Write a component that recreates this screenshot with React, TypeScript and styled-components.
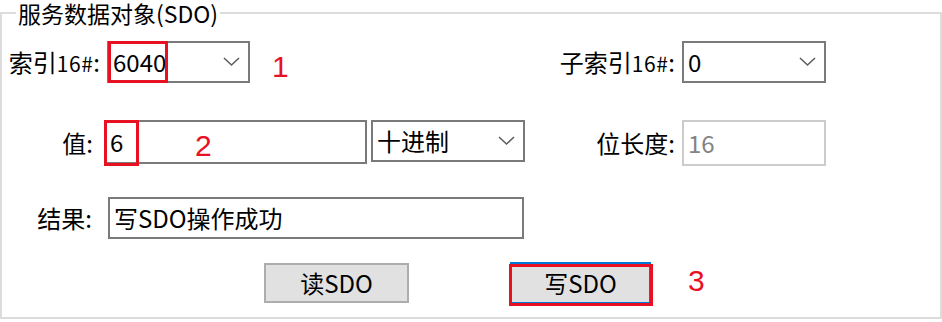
import { FC } from 'react'
import styled, { createGlobalStyle } from 'styled-components'

const red = '#e81123'

const GlobalStyle = createGlobalStyle`
  * {
    box-sizing: border-box;
  }
  html,
  body {
    margin: 0;
    padding: 0;
    background: #fff;
  }
  body {
    width: 942px;
    height: 322px;
    overflow: hidden;
    font-family: 'Noto Sans CJK SC', 'Microsoft YaHei', sans-serif;
    font-size: 24px;
    color: #000;
  }
`

const Group = styled.fieldset`
  margin: 0;
  width: 942px;
  height: 319px;
  border: 2px solid #dcdcdc;
  padding: 15px 114px 0 0;
  min-inline-size: 0;
`

const Caption = styled.legend`
  margin-left: 14px;
  padding: 0 2px;
  font-size: 23px;
  line-height: 26px;
  white-space: nowrap;
`

const Row = styled.div<{ $h: number; $top?: number }>`
  display: flex;
  align-items: center;
  height: ${(p) => p.$h}px;
  margin-top: ${(p) => p.$top ?? 0}px;
`

const Label = styled.span<{ $w?: number; $gap: number }>`
  flex: none;
  width: ${(p) => (p.$w ? `${p.$w}px` : 'auto')};
  margin-right: ${(p) => p.$gap}px;
  text-align: right;
  white-space: nowrap;
  line-height: 1;
`

const Small = styled.span`
  font-size: 21px;
  letter-spacing: 0.5px;
`

const RightField = styled.div`
  display: flex;
  align-items: center;
  align-self: stretch;
  margin-left: auto;
`

const Box = styled.div<{ $w: number; $h: number; $left?: number; $disabled?: boolean }>`
  position: relative;
  flex: none;
  align-self: flex-start;
  display: flex;
  align-items: center;
  width: ${(p) => p.$w}px;
  height: ${(p) => p.$h}px;
  margin-left: ${(p) => p.$left ?? 0}px;
  padding: 0 8px 0 4px;
  border: 2px solid ${(p) => (p.$disabled ? '#cccccc' : '#7a7a7a')};
  background: #fff;
  color: ${(p) => (p.$disabled ? '#838383' : '#000')};
  line-height: 1;
  white-space: nowrap;
`

const Chevron = styled.svg`
  flex: none;
  margin-left: auto;
  width: 17px;
  height: 10px;
`

const Mark = styled.span<{ $l: number; $t: number; $w: number; $h: number }>`
  position: absolute;
  left: ${(p) => p.$l}px;
  top: ${(p) => p.$t}px;
  width: ${(p) => p.$w}px;
  height: ${(p) => p.$h}px;
  border: 3px solid ${red};
  pointer-events: none;
`

const Note = styled.span<{ $left?: number; $shift?: number }>`
  flex: none;
  margin-left: ${(p) => p.$left ?? 0}px;
  margin-top: ${(p) => p.$shift ?? 0}px;
  font-family: 'Liberation Sans', Arial, sans-serif;
  font-size: 30px;
  line-height: 30px;
  color: ${red};
`

const FloatNote = styled(Note)`
  position: absolute;
  left: 89px;
  top: 9px;
  margin: 0;
`

const ButtonWrap = styled.div<{ $left: number }>`
  position: relative;
  flex: none;
  align-self: flex-start;
  margin-left: ${(p) => p.$left}px;
`

const Button = styled.button<{ $w: number; $h: number; $focused?: boolean; $top?: number }>`
  display: block;
  width: ${(p) => p.$w}px;
  height: ${(p) => p.$h}px;
  margin-top: ${(p) => p.$top ?? 0}px;
  padding: 0;
  border: 2px solid ${(p) => (p.$focused ? '#0078d7' : '#adadad')};
  background: #e1e1e1;
  font-family: inherit;
  font-size: 24px;
  line-height: 1;
  color: #000;
`

const Combo: FC<{ value: string; w: number; h: number; left?: number; mark?: boolean }> = ({
  value,
  w,
  h,
  left,
  mark,
}) => (
  <Box $w={w} $h={h} $left={left}>
    {value}
    <Chevron viewBox="0 0 17 10">
      <polyline points="1,1 8.5,8 16,1" fill="none" stroke="#5f5f5f" strokeWidth="1.6" />
    </Chevron>
    {mark && <Mark $l={-1} $t={-2} $w={60} $h={42} />}
  </Box>
)

export default function App() {
  return (
    <>
      <GlobalStyle />
      <Group>
        <Caption>服务数据对象(SDO)</Caption>

        <Row $h={42}>
          <Label $w={98} $gap={7}>
            索引<Small>16#</Small>:
          </Label>
          <Combo value="6040" w={143} h={42} mark />
          <Note $left={22} $shift={10}>
            1
          </Note>
          <RightField>
            <Label $gap={7}>
              子索引<Small>16#</Small>:
            </Label>
            <Combo value="0" w={144} h={42} />
          </RightField>
        </Row>

        <Row $h={46} $top={37}>
          <Label $w={91} $gap={11}>
            值:
          </Label>
          <Box $w={263} $h={44}>
            6
            <Mark $l={-2} $t={-2} $w={35} $h={46} />
            <FloatNote>2</FloatNote>
          </Box>
          <Combo value="十进制" w={154} h={42} left={4} />
          <RightField>
            <Label $gap={7}>位长度:</Label>
            <Box $w={144} $h={46} $disabled>
              16
            </Box>
          </RightField>
        </Row>

        <Row $h={42} $top={31}>
          <Label $w={90} $gap={16}>
            结果:
          </Label>
          <Box $w={416} $h={42}>
            写SDO操作成功
          </Box>
        </Row>

        <Row $h={44} $top={23}>
          <ButtonWrap $left={262}>
            <Button $w={145} $h={40} $top={1}>
              读SDO
            </Button>
          </ButtonWrap>
          <ButtonWrap $left={101}>
            <Button $w={141} $h={42} $focused>
              写SDO
            </Button>
            <Mark $l={-1} $t={2} $w={144} $h={42} />
          </ButtonWrap>
          <Note $left={37} $shift={-6}>
            3
          </Note>
        </Row>
      </Group>
    </>
  )
}
